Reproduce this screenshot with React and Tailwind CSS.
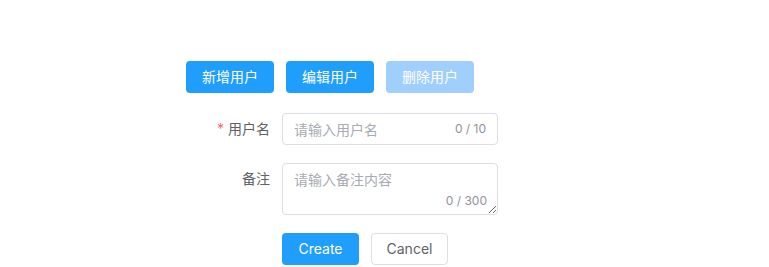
import React from "react";

export default function App() {
  const font = { fontFamily: 'Inter, "Noto Sans CJK SC", sans-serif' };
  return (
    <div className="w-[769px] h-[267px] bg-white overflow-hidden" style={font}>
      <div className="pt-[61px] pl-[186px] flex gap-3">
        <button className="h-8 w-[88px] rounded bg-[#209efd] text-white text-sm flex items-center justify-center">新增用户</button>
        <button className="h-8 w-[88px] rounded bg-[#209efd] text-white text-sm flex items-center justify-center">编辑用户</button>
        <button className="h-8 w-[88px] rounded bg-[#a0cffd] text-white text-sm flex items-center justify-center cursor-not-allowed">删除用户</button>
      </div>
      <div className="mt-5 flex flex-col gap-[18px]">
        <div className="flex">
          <label className="w-[282px] pr-3 h-8 flex items-center justify-end text-sm text-[#606266]">
            <span className="text-[#f56c6c] mr-1">*</span>用户名
          </label>
          <div className="relative w-[216px] h-8 rounded border border-[#dcdfe6] flex items-center">
            <input
              className="w-full h-full pl-[11px] pr-[60px] text-sm text-[#606266] placeholder:text-[#a8abb2] outline-none bg-transparent"
              placeholder="请输入用户名"
              style={font}
            />
            <span className="absolute right-[11px] text-xs text-[#909399]">0 / 10</span>
          </div>
        </div>
        <div className="flex">
          <label className="w-[282px] pr-3 h-8 flex items-center justify-end text-sm text-[#606266]">备注</label>
          <div className="relative w-[216px] h-[52px]">
            <textarea
              className="w-full h-full rounded border border-[#dcdfe6] px-[11px] py-[5px] text-sm leading-[22px] text-[#606266] placeholder:text-[#a8abb2] outline-none resize-y block"
              placeholder="请输入备注内容"
              style={font}
            />
            <span className="absolute right-[11px] bottom-[4px] text-xs leading-5 text-[#909399]">0 / 300</span>
          </div>
        </div>
        <div className="flex pl-[282px] gap-3">
          <button className="h-8 w-[77px] rounded bg-[#209efd] text-white text-sm flex items-center justify-center">Create</button>
          <button className="h-8 w-[77px] rounded border border-[#dcdfe6] bg-white text-[#606266] text-sm flex items-center justify-center">Cancel</button>
        </div>
      </div>
    </div>
  );
}
